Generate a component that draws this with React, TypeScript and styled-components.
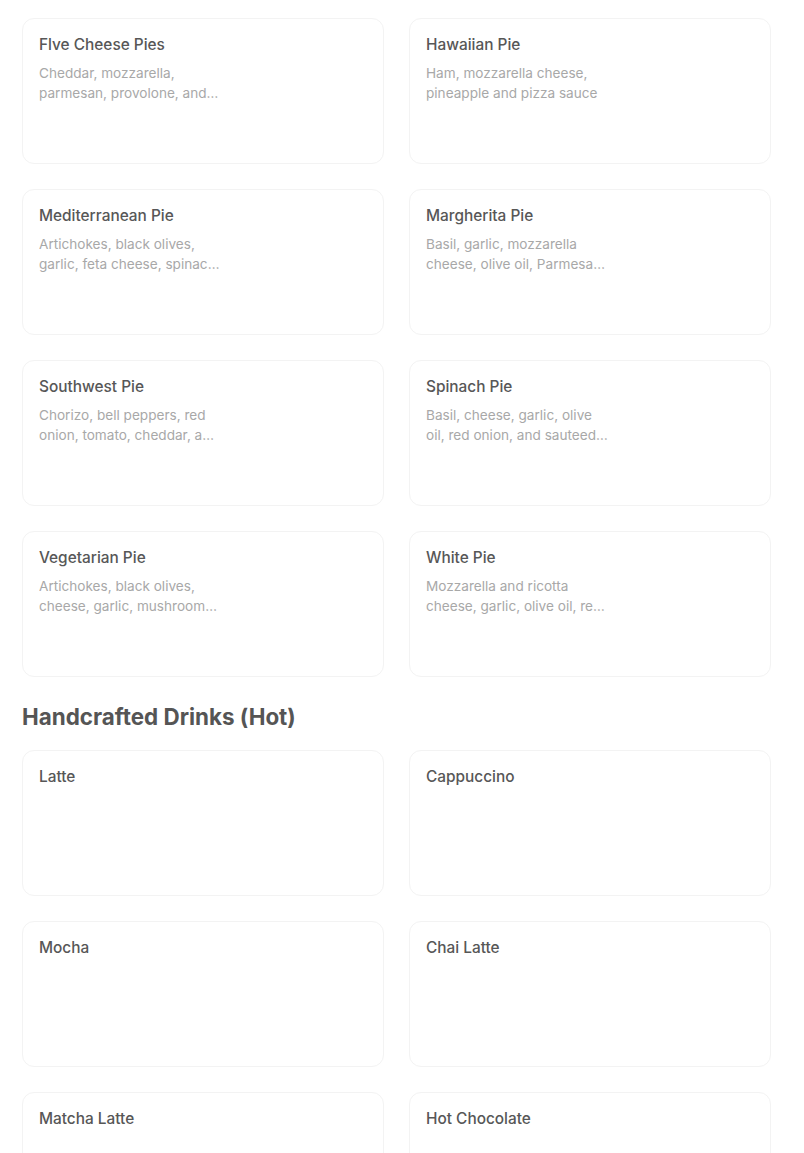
import React from "react";
import styled, { createGlobalStyle } from "styled-components";

const Global = createGlobalStyle`
  html, body { margin: 0; padding: 0; background: #ffffff; }
  body { font-family: Inter, "Noto Sans", sans-serif; -webkit-font-smoothing: antialiased; }
`;

const Page = styled.main`
  width: 749px;
  padding: 18px 0 0 22px;
`;

const Grid = styled.div`
  display: grid;
  grid-template-columns: 362px 362px;
  column-gap: 25px;
  row-gap: 25px;
`;

const Card = styled.article`
  box-sizing: border-box;
  height: 146px;
  padding: 15px 16px;
  border: 1px solid #f3f3f3;
  border-radius: 12px;
  background: #fff;
  overflow: hidden;
`;

const Title = styled.h3`
  margin: 0;
  font-size: 15.4px;
  line-height: 21px;
  font-weight: 500;
  color: #575757;
`;

const Desc = styled.p`
  margin: 8px 0 0;
  max-width: 183px;
  font-size: 13.6px;
  line-height: 20px;
  font-weight: 400;
  color: #a8a8a8;
  display: -webkit-box;
  -webkit-line-clamp: 2;
  -webkit-box-orient: vertical;
  overflow: hidden;
`;

const SectionTitle = styled.h2`
  margin: 26px 0 19px;
  font-size: 22.4px;
  line-height: 28px;
  font-weight: 700;
  color: #555555;
`;

type Item = { name: string; desc?: string };

const pies: Item[] = [
  { name: "Flve Cheese Pies", desc: "Cheddar, mozzarella, parmesan, provolone, and romano cheese" },
  { name: "Hawaiian Pie", desc: "Ham, mozzarella cheese, pineapple and pizza sauce" },
  { name: "Mediterranean Pie", desc: "Artichokes, black olives, garlic, feta cheese, spinach and tomato" },
  { name: "Margherita Pie", desc: "Basil, garlic, mozzarella cheese, olive oil, Parmesan and tomato" },
  { name: "Southwest Pie", desc: "Chorizo, bell peppers, red onion, tomato, cheddar, and jalapeño" },
  { name: "Spinach Pie", desc: "Basil, cheese, garlic, olive oil, red onion, and sauteed spinach" },
  { name: "Vegetarian Pie", desc: "Artichokes, black olives, cheese, garlic, mushrooms, and peppers" },
  { name: "White Pie", desc: "Mozzarella and ricotta cheese, garlic, olive oil, red pepper flakes" },
];

const drinks: Item[] = [
  { name: "Latte" },
  { name: "Cappuccino" },
  { name: "Mocha" },
  { name: "Chai Latte" },
  { name: "Matcha Latte" },
  { name: "Hot Chocolate" },
];

const MenuGrid = ({ items }: { items: Item[] }) => (
  <Grid>
    {items.map((it) => (
      <Card key={it.name}>
        <Title>{it.name}</Title>
        {it.desc && <Desc>{it.desc}</Desc>}
      </Card>
    ))}
  </Grid>
);

export default function App() {
  return (
    <>
      <Global />
      <Page>
        <MenuGrid items={pies} />
        <SectionTitle>Handcrafted Drinks (Hot)</SectionTitle>
        <MenuGrid items={drinks} />
      </Page>
    </>
  );
}
